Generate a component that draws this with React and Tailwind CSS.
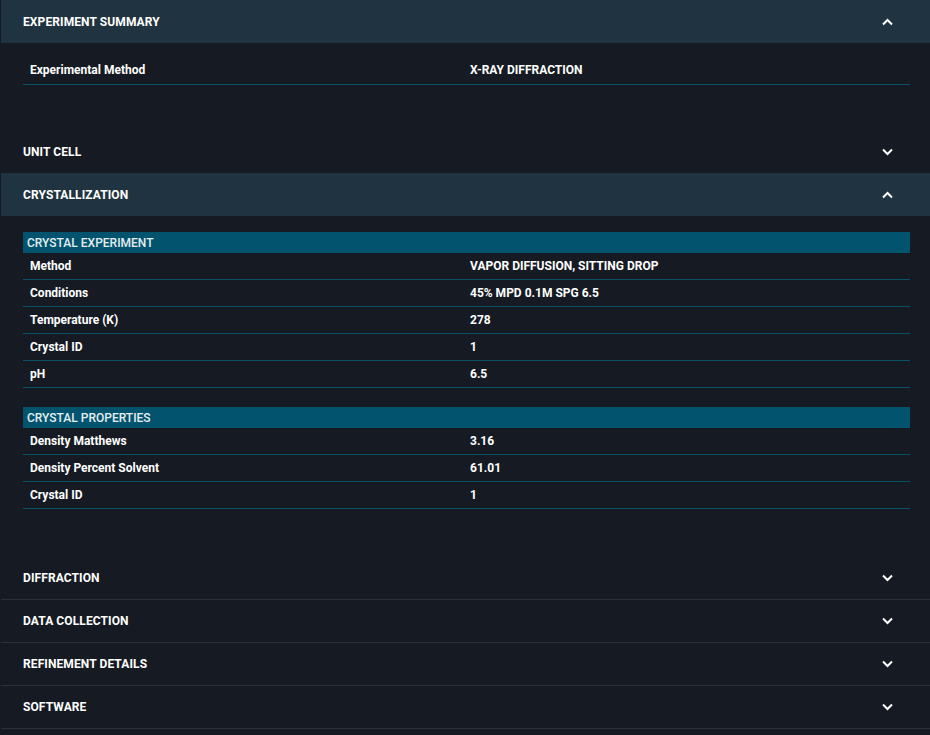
import React from 'react'

const font = { fontFamily: 'Roboto, "Liberation Sans", sans-serif' }

function Chevron({ up }) {
  return (
    <svg width="11" height="8" viewBox="0 0 11 8" className="block">
      <polyline
        points={up ? '1,6.5 5.5,2 10,6.5' : '1,1.5 5.5,6 10,1.5'}
        fill="none"
        stroke="#ffffff"
        strokeWidth="2"
      />
    </svg>
  )
}

function SectionHeader({ title, open, bordered }) {
  return (
    <div
      className={`ml-px h-[43px] flex items-center justify-between pl-[22px] pr-[37px] ${
        open ? 'bg-[#1f3440]' : ''
      } ${bordered ? 'border-b border-[#2a313b]' : ''}`}
    >
      <span className="text-[12px] font-bold text-white uppercase tracking-[0.1px]">{title}</span>
      <Chevron up={open} />
    </div>
  )
}

function Row({ label, value }) {
  return (
    <div className="grid grid-cols-[447px_1fr] h-[27px] items-center border-b border-[#0a5068] text-[12px] font-bold text-white">
      <div className="pl-[7px]">{label}</div>
      <div>{value}</div>
    </div>
  )
}

function Table({ title, rows }) {
  return (
    <div>
      <div className="h-[21px] bg-[#02546e] flex items-center pl-[4px] text-[12px] font-medium text-[#e6eef2] uppercase">
        {title}
      </div>
      {rows.map(([l, v]) => (
        <Row key={l} label={l} value={v} />
      ))}
    </div>
  )
}

export default function App() {
  return (
    <div className="w-[930px] h-[735px] bg-[#161b23] overflow-hidden" style={font}>
      <SectionHeader title="Experiment Summary" open />
      <div className="pl-[23px] pr-[20px] pt-[13px] h-[87px]">
        <div className="grid grid-cols-[447px_1fr] h-[29px] items-center border-b border-[#0a5068] text-[12px] font-bold text-white">
          <div className="pl-[7px]">Experimental Method</div>
          <div>X-RAY DIFFRACTION</div>
        </div>
      </div>

      <SectionHeader title="Unit Cell" />
      <SectionHeader title="Crystallization" open />
      <div className="pl-[23px] pr-[20px] pt-[16px] pb-[48px] flex flex-col gap-[19px]">
        <Table
          title="Crystal Experiment"
          rows={[
            ['Method', 'VAPOR DIFFUSION, SITTING DROP'],
            ['Conditions', '45% MPD 0.1M SPG 6.5'],
            ['Temperature (K)', '278'],
            ['Crystal ID', '1'],
            ['pH', '6.5'],
          ]}
        />
        <Table
          title="Crystal Properties"
          rows={[
            ['Density Matthews', '3.16'],
            ['Density Percent Solvent', '61.01'],
            ['Crystal ID', '1'],
          ]}
        />
      </div>

      <SectionHeader title="Diffraction" bordered />
      <SectionHeader title="Data Collection" bordered />
      <SectionHeader title="Refinement Details" bordered />
      <SectionHeader title="Software" bordered />
    </div>
  )
}
